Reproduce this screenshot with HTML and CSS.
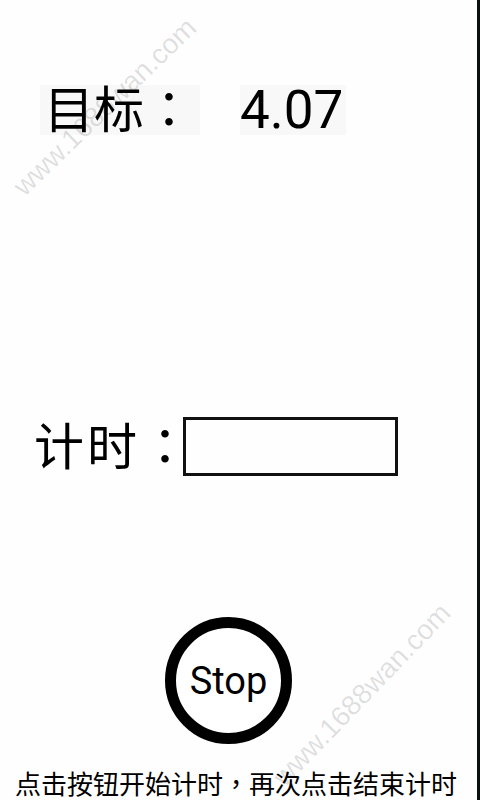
FILE: index.html
```html
<!DOCTYPE html>
<html lang="zh-CN">
<head>
<meta charset="utf-8">
<link rel="stylesheet" href="styles.css">
</head>
<body>
<div class="screen">
  <div class="row-target">
    <div class="label">目标<span class="punct" lang="zh-Hant">：</span></div>
    <div class="value">4.07</div>
  </div>
  <div class="row-timer">
    <div class="timer-label">计时<span class="punct" lang="zh-Hant">：</span></div>
    <div class="timer-box"></div>
  </div>
  <div class="btn-wrap">
    <div class="stop-btn">Stop</div>
  </div>
  <div class="hint">点击按钮开始计时<span class="punct" lang="zh-Hant">，</span>再次点击结束计时</div>
  <div class="watermark wm-top">www.1688wan.com</div>
  <div class="watermark wm-bottom">www.1688wan.com</div>
</div>
</body>
</html>
```
FILE: styles.css
```css
html, body {
  margin: 0;
  padding: 0;
  background: #ffffff;
}
.screen {
  position: relative;
  width: 480px;
  height: 800px;
  box-sizing: border-box;
  border-right: 3px solid #0b1111;
  background: #fefefe;
  overflow: hidden;
  display: flex;
  flex-direction: column;
  font-family: "Noto Sans CJK SC", "Noto Sans", sans-serif;
  color: #000;
}
.punct {
  font-family: "Noto Sans CJK TC", "Noto Sans CJK SC", sans-serif;
}
.row-target {
  display: flex;
  align-items: center;
  padding: 85px 0 0 40px;
  height: 50px;
}
.label {
  width: 156px;
  padding-left: 4px;
  height: 50px;
  line-height: 42px;
  font-size: 50px;
  background: #f8f8f8;
  white-space: nowrap;
}
.value {
  margin-left: 40px;
  width: 106px;
  height: 50px;
  line-height: 50px;
  background: #f8f8f8;
  font-family: Roboto, "Noto Sans", sans-serif;
  font-size: 53px;
}
.row-timer {
  display: flex;
  align-items: center;
  margin-top: 282px;
  height: 59px;
}
.timer-label {
  width: 149px;
  padding-left: 34px;
  padding-bottom: 8px;
  font-size: 50px;
  line-height: 50px;
  letter-spacing: 3px;
  white-space: nowrap;
}
.timer-box {
  width: 215px;
  height: 59px;
  box-sizing: border-box;
  border: 3px solid #111;
  background: transparent;
}
.btn-wrap {
  display: flex;
  margin-top: 141px;
  padding-left: 165px;
}
.stop-btn {
  width: 127px;
  height: 127px;
  box-sizing: border-box;
  border: 11px solid #000;
  border-radius: 50%;
  display: flex;
  align-items: center;
  justify-content: center;
  font-family: Roboto, "Noto Sans", sans-serif;
  font-size: 38px;
  background: #fff;
}
.hint {
  margin-top: 24px;
  padding-left: 15px;
  font-size: 26px;
  line-height: 30px;
  white-space: nowrap;
}
.watermark {
  position: absolute;
  font-family: "Liberation Sans", Arial, sans-serif;
  font-size: 28px;
  color: rgba(0, 0, 0, 0.13);
  white-space: nowrap;
  transform: translate(-50%, -50%) rotate(-44deg);
  pointer-events: none;
}
.wm-top {
  left: 105px;
  top: 107px;
}
.wm-bottom {
  left: 362px;
  top: 695px;
  transform: translate(-50%, -50%) rotate(-46deg);
}
```
